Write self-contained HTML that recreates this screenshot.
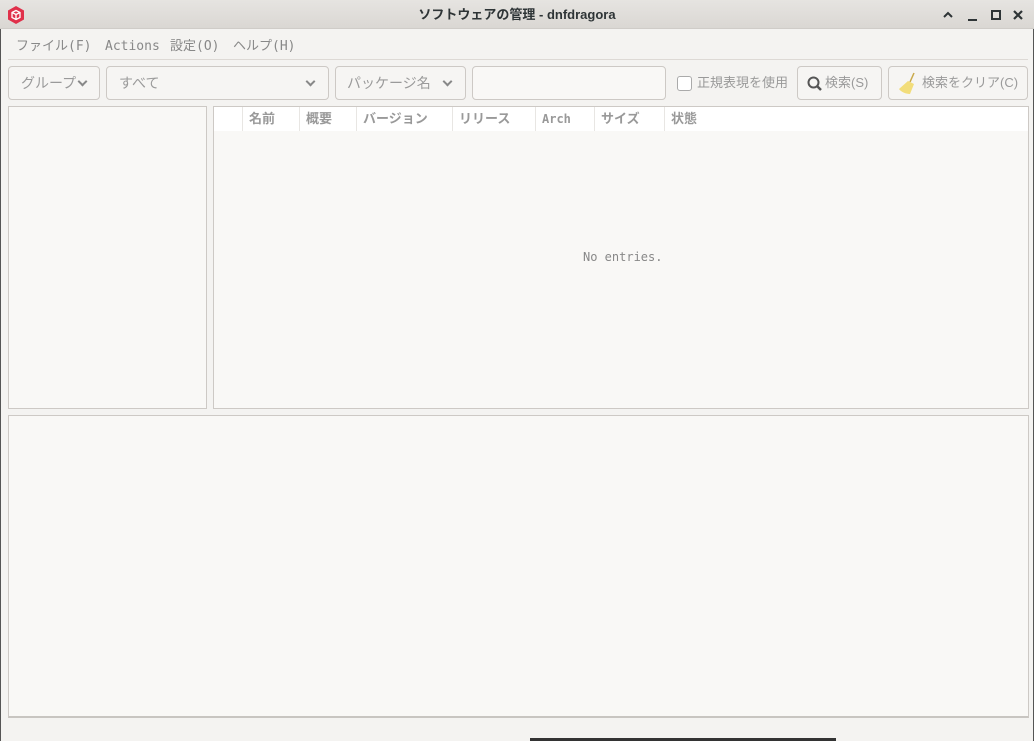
<!DOCTYPE html>
<html><head><meta charset="utf-8"><style>
*{box-sizing:border-box;margin:0;padding:0}
body{width:1034px;height:741px;overflow:hidden;background:#f4f3f1;font-family:"Liberation Sans","Noto Sans CJK JP",sans-serif;position:relative;color:#999}
.abs{position:absolute;line-height:1.2}
.tb{left:0;top:0;width:1034px;height:29px;background:linear-gradient(#e6e4e1,#dad7d3);border-bottom:1px solid #cfccc8}
.title{left:0;width:1034px;top:7px;text-align:center;font-size:13px;font-weight:bold;color:#2e3436}
.menu{top:39px;font-size:13px;color:#888;font-family:"DejaVu Sans Mono","Noto Sans CJK JP",monospace}
.box{border:1px solid #cdc9c5;border-radius:4px;background:#f6f5f3}
.lbl{font-size:14px;color:#9a9a9a;position:absolute;top:8px;white-space:nowrap}
.chev{position:absolute;top:11px;width:7px;height:7px;border-right:2px solid #888;border-bottom:2px solid #888;transform:rotate(45deg)}
.hdr{font-size:13px;font-weight:bold;color:#999;top:111px}
.sep{top:107px;width:1px;height:24px;background:#e8e6e3}
</style></head><body>
<div class="abs" style="left:0;top:0;width:1px;height:741px;background:#555"></div>
<div class="abs" style="right:0;top:0;width:1px;height:741px;background:#555"></div>
<div class="abs tb"></div>
<svg class="abs" style="left:7px;top:6px" width="18" height="18"><polygon points="9,0 17,4.5 17,13.5 9,18 1,13.5 1,4.5" fill="#e0304a"/><path d="M5 6.5 L9 4.5 L13 6.5 L13 11.5 L9 13.5 L5 11.5Z M5 6.5 L9 8.5 L13 6.5 M9 8.5 V13.5" stroke="#fff" stroke-width="1.3" fill="none"/></svg>
<div class="abs title">ソフトウェアの管理 - dnfdragora</div>
<svg class="abs" style="left:943px;top:11px" width="10" height="8"><path d="M1 6 L5 2 L9 6" stroke="#2e3436" stroke-width="2" fill="none"/></svg>
<div class="abs" style="left:968px;top:19px;width:9px;height:2px;background:#2e3436"></div>
<div class="abs" style="left:991px;top:10px;width:10px;height:10px;border:2px solid #2e3436"></div>
<svg class="abs" style="left:1013px;top:10px" width="10" height="10"><path d="M1 1 L9 9 M9 1 L1 9" stroke="#2e3436" stroke-width="2.2"/></svg>
<div class="abs menu" style="left:16px">ファイル(F)</div>
<div class="abs menu" style="left:105px">Actions</div>
<div class="abs menu" style="left:170px">設定(O)</div>
<div class="abs menu" style="left:233px">ヘルプ(H)</div>
<div class="abs" style="left:8px;top:59px;width:1020px;height:1px;background:#ddd9d5"></div>
<div class="abs box" style="left:8px;top:66px;width:92px;height:34px"><span class="lbl" style="left:12px">グループ</span><span class="chev" style="left:70px"></span></div>
<div class="abs box" style="left:106px;top:66px;width:223px;height:34px"><span class="lbl" style="left:12px">すべて</span><span class="chev" style="left:200px"></span></div>
<div class="abs box" style="left:335px;top:66px;width:131px;height:34px"><span class="lbl" style="left:11px">パッケージ名</span><span class="chev" style="left:108px"></span></div>
<div class="abs box" style="left:472px;top:66px;width:194px;height:34px;background:#f9f8f6"></div>
<div class="abs" style="left:677px;top:76px;width:15px;height:15px;border:1px solid #aaa;border-radius:3px;background:#fff"></div>
<div class="abs" style="left:697px;top:75px;font-size:13px;color:#999">正規表現を使用</div>
<div class="abs box" style="left:797px;top:66px;width:85px;height:34px"><svg class="abs" style="left:9px;top:9px" width="16" height="16"><circle cx="6.5" cy="6.5" r="5" stroke="#555" stroke-width="2" fill="none"/><path d="M10 10 L14 14" stroke="#555" stroke-width="2.5"/></svg><span class="lbl" style="left:27px;font-size:13px;top:8px">検索(S)</span></div>
<div class="abs box" style="left:888px;top:66px;width:140px;height:34px"><svg class="abs" style="left:9px;top:5px" width="22" height="24"><path d="M16 1 L12 10" stroke="#c9a94a" stroke-width="1.5"/><path d="M10 9 L16 12 L12 22 C8 22 3 20 1 17 Z" fill="#f2dd7a"/></svg><span class="lbl" style="left:33px;font-size:13px;top:8px">検索をクリア(C)</span></div>
<div class="abs" style="left:8px;top:106px;width:199px;height:303px;border:1px solid #cdc9c5;background:#f9f8f6"></div>
<div class="abs" style="left:213px;top:106px;width:816px;height:303px;border:1px solid #cdc9c5;background:#f9f8f6"></div>
<div class="abs" style="left:214px;top:107px;width:814px;height:24px;background:#fff"></div>
<div class="abs sep" style="left:242px"></div><div class="abs sep" style="left:299px"></div><div class="abs sep" style="left:356px"></div><div class="abs sep" style="left:452px"></div><div class="abs sep" style="left:535px"></div><div class="abs sep" style="left:594px"></div><div class="abs sep" style="left:664px"></div>
<div class="abs hdr" style="left:249px">名前</div>
<div class="abs hdr" style="left:306px">概要</div>
<div class="abs hdr" style="left:363px">バージョン</div>
<div class="abs hdr" style="left:459px">リリース</div>
<div class="abs hdr" style="left:542px;font-family:'DejaVu Sans Mono',monospace;font-size:12px;top:112px">Arch</div>
<div class="abs hdr" style="left:601px">サイズ</div>
<div class="abs hdr" style="left:671px">状態</div>
<div class="abs" style="left:583px;top:250px;font-size:12px;color:#888;font-family:'DejaVu Sans Mono',monospace">No entries.</div>
<div class="abs" style="left:8px;top:415px;width:1021px;height:303px;border:1px solid #cdc9c5;border-bottom:2px solid #c8c5c1;background:#f9f8f6"></div>
<div class="abs" style="left:530px;top:738px;width:306px;height:3px;background:#333"></div>
</body></html>
